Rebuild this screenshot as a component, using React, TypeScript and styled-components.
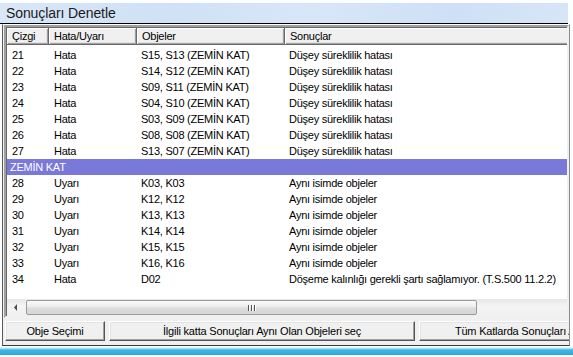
import React from "react";
import styled, { createGlobalStyle } from "styled-components";

const Global = createGlobalStyle`
  html, body { margin: 0; padding: 0; background: #fff; }
  body { width: 573px; height: 357px; overflow: hidden; font-family: "Liberation Sans", Arial, sans-serif; }
`;

const Win = styled.div`
  width: 573px;
  height: 357px;
  display: flex;
  flex-direction: column;
  background: #fdfeff;
  overflow: hidden;
`;

const TitleBar = styled.div`
  height: 21px;
  margin-top: 3px;
  width: 568px;
  display: flex;
  align-items: center;
  padding-left: 6px;
  box-sizing: border-box;
  background: linear-gradient(90deg, #d9e7f7 0%, #cfe1f5 30%, #d8e7f8 55%, #cde0f5 80%, #d6e6f7 100%);
  border-bottom: 1px solid #000;
  font-family: "Liberation Sans", Arial, sans-serif;
  font-size: 14px;
  letter-spacing: -0.1px;
  color: #1a1a1a;
`;

const Client = styled.div`
  width: 568px;
  height: 322px;
  margin-left: 2px;
  box-sizing: border-box;
  background: #f0f0f0;
  border-left: 1px solid #5a5a5a;
  border-right: 1px solid #8a8a8a;
  border-bottom: 1px solid #3a3a3a;
  border-top: 1px solid #ffffff;
  display: flex;
  flex-direction: column;
  padding: 0 0 4px 1px;
  gap: 3px;
  overflow: hidden;
`;

const ListBox = styled.div`
  flex: 1;
  display: flex;
  flex-direction: column;
  border-style: solid;
  border-width: 2px;
  border-color: #a0a0a0 #f0f0f0 #f0f0f0 #a0a0a0;
  box-shadow: inset 1px 1px 0 #696969;
  background: #fff;
  overflow: hidden;
  font-size: 11px;
  letter-spacing: -0.25px;
  color: #000;
`;

const HeaderRow = styled.div`
  display: flex;
  height: 17px;
  margin: 1px 0 0 1px;
  background: #f0f0f0;
  flex-shrink: 0;
`;

const HeadCell = styled.div<{ $w: number }>`
  width: ${(p) => p.$w}px;
  flex-shrink: 0;
  box-sizing: border-box;
  padding-left: 5px;
  line-height: 16px;
  box-shadow: inset 1px 1px 0 #fff, inset -1px -1px 0 #a0a0a0, inset -2px -2px 0 #e3e3e3;
  border-bottom: 1px solid #696969;
  border-right: 1px solid #696969;
  white-space: nowrap;
  overflow: hidden;
`;

const Body = styled.div`
  flex: 1;
  padding-top: 2px;
  margin-left: 1px;
  overflow: hidden;
`;

const Row = styled.div`
  display: flex;
  height: 16px;
  line-height: 16px;
  white-space: nowrap;
`;

const Cell = styled.div<{ $w: number; $pad?: number }>`
  width: ${(p) => p.$w}px;
  flex-shrink: 0;
  box-sizing: border-box;
  padding-left: ${(p) => p.$pad ?? 5}px;
  overflow: hidden;
`;

const Band = styled.div`
  height: 16px;
  line-height: 16px;
  background: #7a78d9;
  color: #fff;
  padding-left: 3px;
`;

const HScroll = styled.div`
  height: 17px;
  display: flex;
  flex-shrink: 0;
  background: linear-gradient(#e6e6e6, #f4f4f4 40%, #f0f0f0);
  margin-left: 1px;
`;

const ArrowBtn = styled.div`
  width: 17px;
  height: 17px;
  display: flex;
  align-items: center;
  justify-content: center;
  flex-shrink: 0;
`;

const Thumb = styled.div`
  width: 451px;
  height: 15px;
  margin: 1px 0 0 2px;
  box-sizing: border-box;
  border: 1px solid #9a9a9a;
  border-radius: 2px;
  background: linear-gradient(#fafafa, #ececec 45%, #dcdcdc 55%, #d6d6d6);
  display: flex;
  align-items: center;
  justify-content: center;
`;

const Grip = styled.div`
  display: flex;
  gap: 2px;
`;

const GripLine = styled.span`
  width: 1px;
  height: 6px;
  background: #555;
  box-shadow: 1px 0 0 #fff;
`;

const ButtonRow = styled.div`
  display: flex;
  gap: 4px;
  height: 20px;
  flex-shrink: 0;
  margin-left: 1px;
`;

const Btn = styled.div<{ $w: number }>`
  width: ${(p) => p.$w}px;
  flex-shrink: 0;
  height: 20px;
  box-sizing: border-box;
  background: #f0f0f0;
  border-style: solid;
  border-width: 1px;
  border-color: #ffffff #555 #555 #ffffff;
  box-shadow: inset -1px -1px 0 #a0a0a0, inset 1px 1px 0 #e3e3e3;
  display: flex;
  align-items: center;
  justify-content: center;
  font-size: 11px;
  letter-spacing: -0.2px;
  color: #000;
  white-space: nowrap;
  overflow: hidden;
`;

const BottomStripe = styled.div`
  height: 9px;
  width: 573px;
  background: linear-gradient(#ffffff 0, #ffffff 1px, #c8eaf8 2px, #3db6e4 4px, #2aa8dc 100%);
`;

const W = [42, 88, 148, 420];

type R = [string, string, string, string];

const rowsA: R[] = [
  ["21", "Hata", "S15, S13 (ZEMİN KAT)", "Düşey süreklilik hatası"],
  ["22", "Hata", "S14, S12 (ZEMİN KAT)", "Düşey süreklilik hatası"],
  ["23", "Hata", "S09, S11 (ZEMİN KAT)", "Düşey süreklilik hatası"],
  ["24", "Hata", "S04, S10 (ZEMİN KAT)", "Düşey süreklilik hatası"],
  ["25", "Hata", "S03, S09 (ZEMİN KAT)", "Düşey süreklilik hatası"],
  ["26", "Hata", "S08, S08 (ZEMİN KAT)", "Düşey süreklilik hatası"],
  ["27", "Hata", "S13, S07 (ZEMİN KAT)", "Düşey süreklilik hatası"],
];

const rowsB: R[] = [
  ["28", "Uyarı", "K03, K03", "Aynı isimde objeler"],
  ["29", "Uyarı", "K12, K12", "Aynı isimde objeler"],
  ["30", "Uyarı", "K13, K13", "Aynı isimde objeler"],
  ["31", "Uyarı", "K14, K14", "Aynı isimde objeler"],
  ["32", "Uyarı", "K15, K15", "Aynı isimde objeler"],
  ["33", "Uyarı", "K16, K16", "Aynı isimde objeler"],
  ["34", "Hata", "D02", "Döşeme kalınlığı gerekli şartı sağlamıyor. (T.S.500 11.2.2)"],
];

const DataRow = ({ r }: { r: R }) => (
  <Row>
    <Cell $w={W[0]}>{r[0]}</Cell>
    <Cell $w={W[1]}>{r[1]}</Cell>
    <Cell $w={W[2]} $pad={4}>{r[2]}</Cell>
    <Cell $w={W[3]} $pad={4}>{r[3]}</Cell>
  </Row>
);

export default function App() {
  return (
    <>
      <Global />
      <Win>
        <TitleBar>Sonuçları Denetle</TitleBar>
        <Client>
          <ListBox>
            <HeaderRow>
              <HeadCell $w={W[0]}>Çizgi</HeadCell>
              <HeadCell $w={W[1]}>Hata/Uyarı</HeadCell>
              <HeadCell $w={W[2]}>Objeler</HeadCell>
              <HeadCell $w={W[3]}>Sonuçlar</HeadCell>
            </HeaderRow>
            <Body>
              {rowsA.map((r) => (
                <DataRow key={r[0]} r={r} />
              ))}
              <Band>ZEMİN KAT</Band>
              {rowsB.map((r) => (
                <DataRow key={r[0]} r={r} />
              ))}
            </Body>
            <HScroll>
              <ArrowBtn>
                <svg width="4" height="7" viewBox="0 0 4 7">
                  <path d="M3 0 L0 3.5 L3 7 Z" fill="#4d4d4d" />
                </svg>
              </ArrowBtn>
              <Thumb>
                <Grip>
                  <GripLine />
                  <GripLine />
                  <GripLine />
                </Grip>
              </Thumb>
            </HScroll>
          </ListBox>
          <ButtonRow>
            <Btn $w={100}>Obje Seçimi</Btn>
            <Btn $w={306}>İlgili katta Sonuçları Aynı Olan Objeleri seç</Btn>
            <Btn $w={290}>Tüm Katlarda Sonuçları Aynı Olan Objeleri seç</Btn>
          </ButtonRow>
        </Client>
        <BottomStripe />
      </Win>
    </>
  );
}
